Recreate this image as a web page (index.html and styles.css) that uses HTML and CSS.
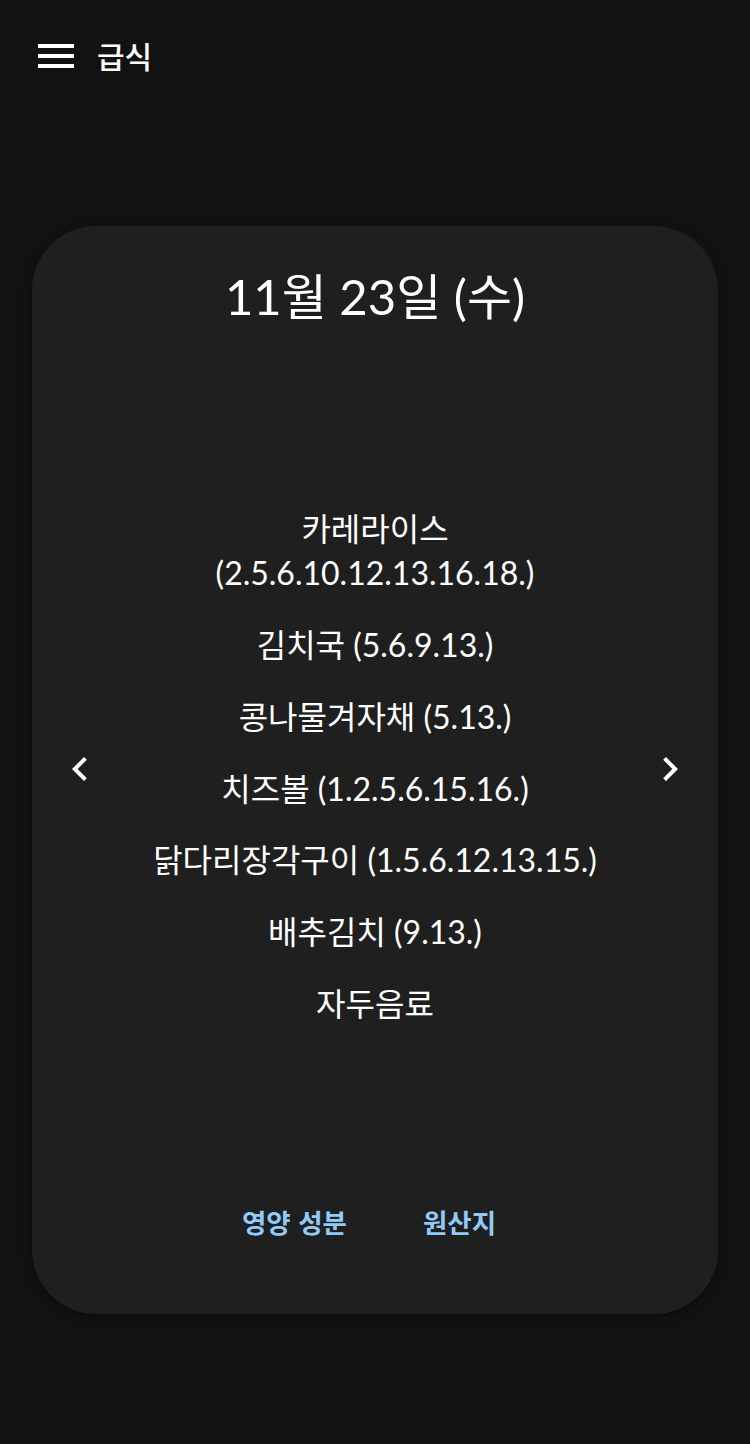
FILE: index.html
```html
<!DOCTYPE html>
<html lang="ko">
<head>
<meta charset="utf-8">
<title>급식</title>
<link rel="stylesheet" href="styles.css">
</head>
<body>
<header class="appbar">
  <button class="menu-btn" aria-label="menu">
    <span class="bar"></span><span class="bar"></span><span class="bar"></span>
  </button>
  <h1 class="appbar-title">급식</h1>
</header>
<main class="card">
  <h2 class="date">11월 23일 (수)</h2>
  <div class="body">
    <button class="nav nav-prev" aria-label="이전">
      <svg viewBox="0 0 24 24" width="48" height="48"><path d="M15.41 7.41 14 6l-6 6 6 6 1.41-1.41L10.83 12z" fill="#fff"/></svg>
    </button>
    <ul class="menu">
      <li>카레라이스<br>(2.5.6.10.12.13.16.18.)</li>
      <li>김치국 (5.6.9.13.)</li>
      <li>콩나물겨자채 (5.13.)</li>
      <li>치즈볼 (1.2.5.6.15.16.)</li>
      <li>닭다리장각구이 (1.5.6.12.13.15.)</li>
      <li>배추김치 (9.13.)</li>
      <li>자두음료</li>
    </ul>
    <button class="nav nav-next" aria-label="다음">
      <svg viewBox="0 0 24 24" width="48" height="48"><path d="M10 6 8.59 7.41 13.17 12l-4.58 4.59L10 18l6-6z" fill="#fff"/></svg>
    </button>
  </div>
  <div class="links">
    <a class="link" href="#">영양 성분</a>
    <a class="link" href="#">원산지</a>
  </div>
</main>
</body>
</html>
```
FILE: styles.css
```css
* { box-sizing: border-box; }
html, body {
  margin: 0;
  padding: 0;
  background: #121212;
  color: #fff;
  font-family: Lato, "Noto Sans CJK KR", sans-serif;
}
body {
  width: 750px;
  height: 1444px;
  overflow: hidden;
}
.appbar {
  height: 110px;
  display: flex;
  align-items: center;
  padding-left: 38px;
}
.menu-btn {
  background: none;
  border: 0;
  padding: 0;
  width: 36px;
  height: 24px;
  display: flex;
  flex-direction: column;
  justify-content: space-between;
  margin: 2px 23px 0 0;
}
.bar {
  display: block;
  width: 36px;
  height: 4px;
  background: #fff;
}
.appbar-title {
  margin: 0;
  font-size: 30px;
  font-weight: 500;
  line-height: 40px;
  font-family: "Noto Sans CJK KR", sans-serif;
}
.card {
  margin: 116px 32px 0;
  height: 1088px;
  background: #1f1f1f;
  border-radius: 64px;
  box-shadow: 0 3px 8px rgba(0,0,0,0.35);
  display: flex;
  flex-direction: column;
  padding: 40px 0 73px;
}
.date {
  margin: 0;
  text-align: center;
  font-size: 49px;
  line-height: 60px;
  font-weight: 400;
}
.body {
  flex: 1;
  display: flex;
  align-items: center;
  padding-top: 6px;
}
.nav {
  background: none;
  border: 0;
  padding: 0;
  width: 48px;
  height: 48px;
  margin: 4px 24px 0;
  flex: none;
}
.nav svg { display: block; }
.menu {
  flex: 1;
  list-style: none;
  margin: 0;
  padding: 0;
  text-align: center;
  font-size: 32px;
  line-height: 44px;
}
.menu li + li { margin-top: 27.7px; }
.links {
  display: flex;
  justify-content: center;
  gap: 76px;
  padding-right: 12px;
  height: 40px;
  align-items: center;
}
.link {
  color: #90caf9;
  text-decoration: none;
  font-family: "Noto Sans CJK KR", sans-serif;
  font-size: 26.5px;
  font-weight: 700;
}
```
